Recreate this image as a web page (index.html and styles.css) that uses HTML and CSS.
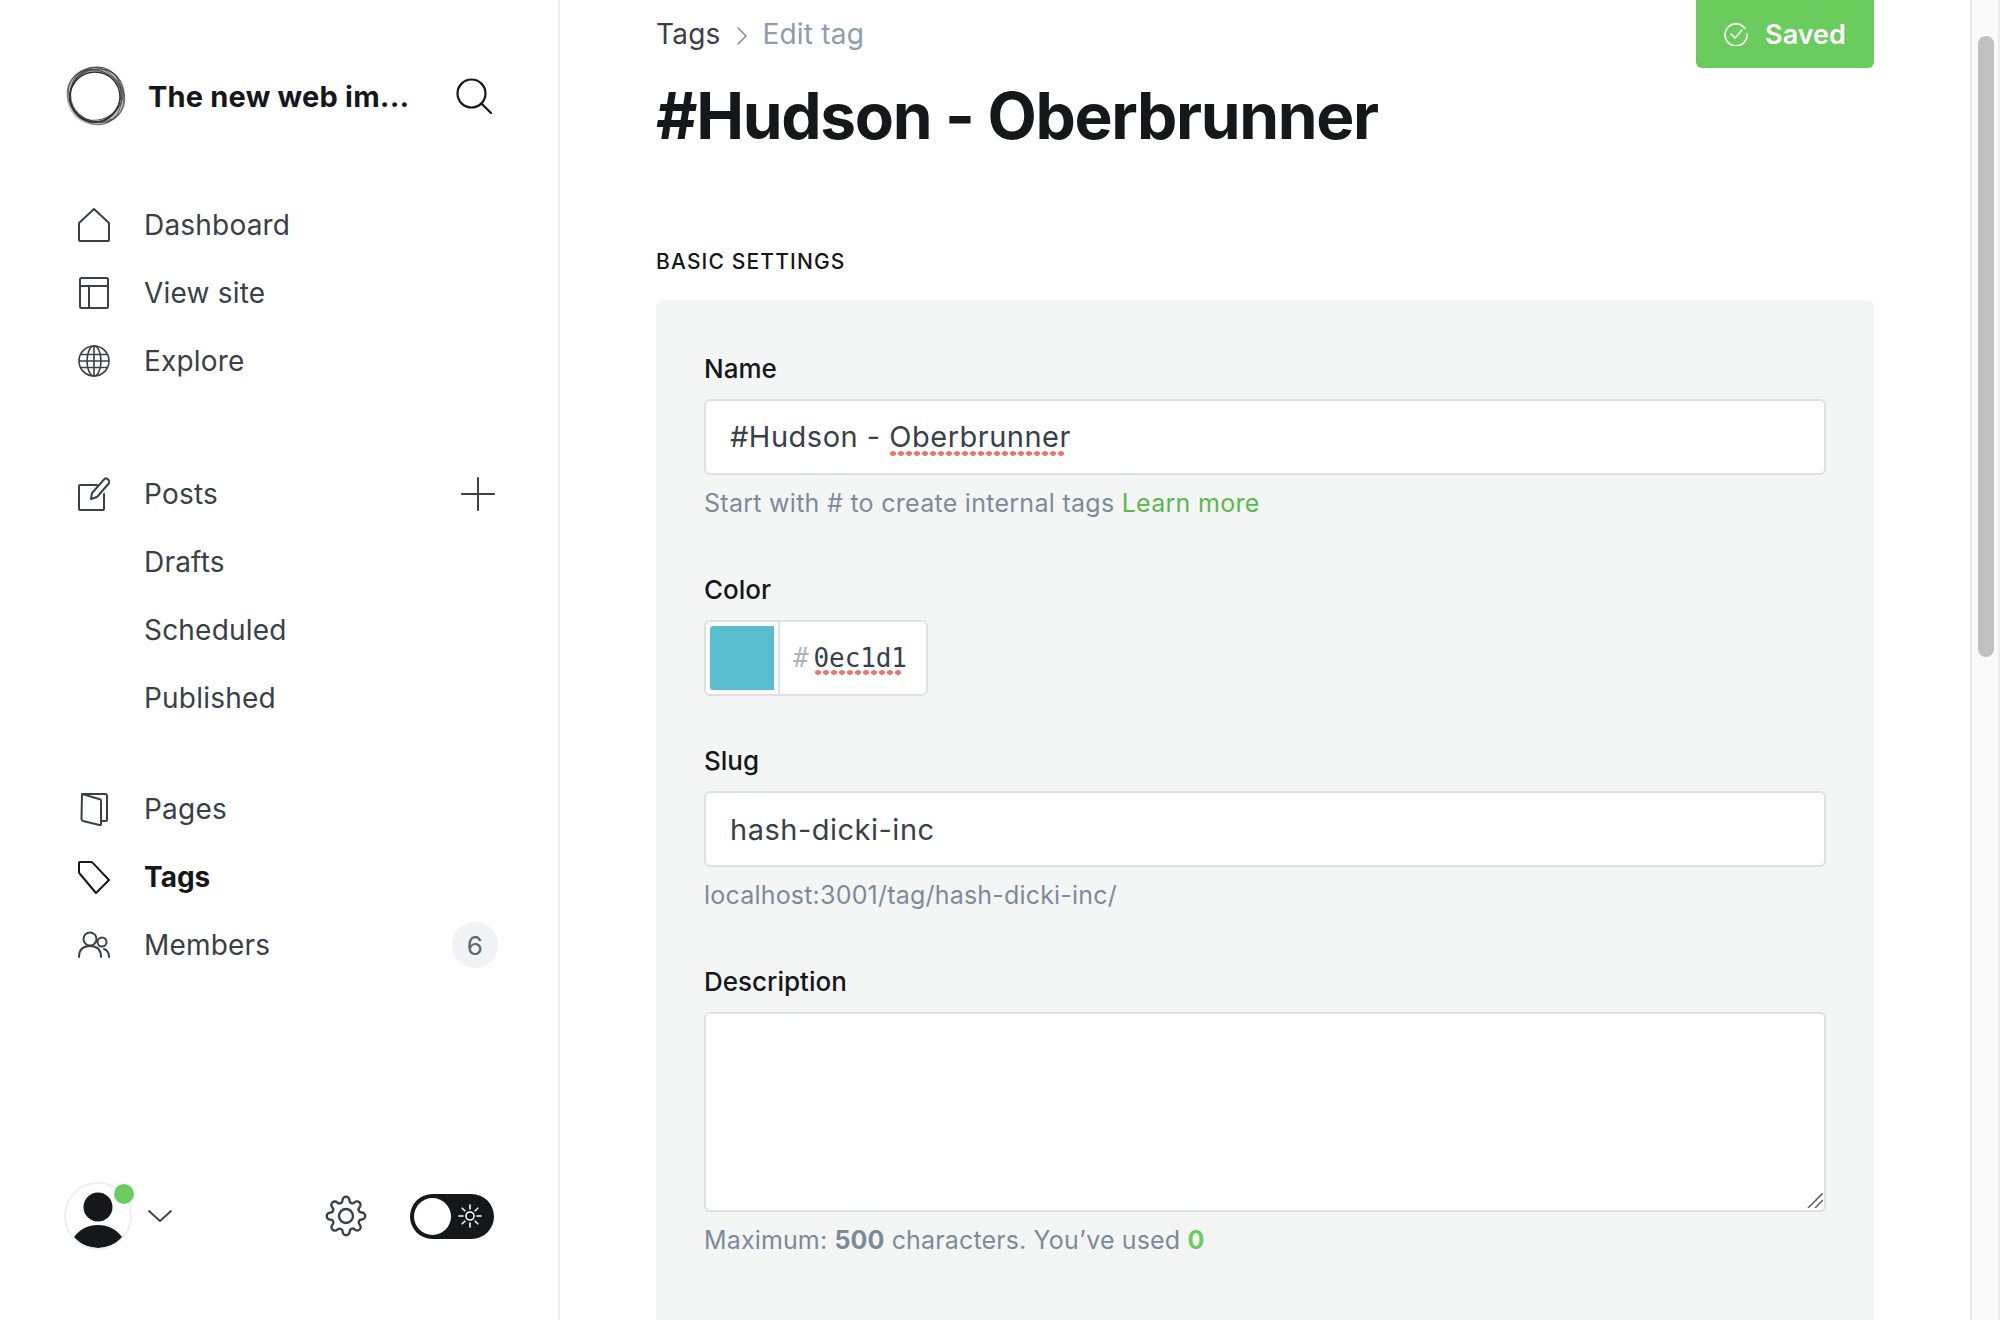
FILE: index.html
```html
<!DOCTYPE html>
<html>

<head>
    <title>Edit tag</title>
    <link rel="stylesheet" href="styles.css">
</head>

<body>
    <aside class="sidebar">
        <div class="site-head">
            <svg class="site-logo" viewBox="0 0 60 60" fill="none" stroke="#2b2e33">
                <circle cx="30" cy="30" r="27" stroke-opacity=".3" stroke-width="4.500" />
                <ellipse cx="30" cy="30" rx="29.500" ry="25" transform="rotate(25 30 30)" stroke-opacity=".6" stroke-width="1" />
                <ellipse cx="30" cy="30" rx="29.500" ry="24.500" transform="rotate(40 30 30)" stroke-opacity=".6" stroke-width="1" />
                <ellipse cx="30" cy="30" rx="29" ry="25" transform="rotate(70 30 30)" stroke-opacity=".6" stroke-width="1" />
                <ellipse cx="29" cy="31" rx="28" ry="25" transform="rotate(115 30 30)" stroke-opacity=".8" stroke-width="1" />
                <ellipse cx="29" cy="31" rx="27.500" ry="25" transform="rotate(150 30 30)" stroke-opacity=".8" stroke-width="1" />
                <circle cx="29" cy="31" r="25" stroke-width="1.400" />
            </svg>
            <span class="site-title">The new web im...</span>
            <svg class="search-icon" viewBox="0 0 36 36" fill="none" stroke="#15171a" stroke-width="2.200" stroke-linecap="round">
                <circle cx="15.500" cy="15.500" r="14" />
                <path d="M25.500 25.500 35 35" />
            </svg>
        </div>

        <nav class="nav-group">
            <a class="nav-item">
                <svg class="nav-icon" viewBox="0 0 32 34" fill="none" stroke="#394047" stroke-width="2" stroke-linejoin="round">
                    <path d="M1 15 16 1l15 14v17a1 1 0 0 1-1 1H2a1 1 0 0 1-1-1z" />
                </svg>
                Dashboard
            </a>
            <a class="nav-item">
                <svg class="nav-icon" viewBox="0 0 32 34" fill="none" stroke="#394047" stroke-width="2" stroke-linejoin="round">
                    <rect x="2" y="2" width="28" height="30" rx="1.500" />
                    <path d="M2 10h28M11 10v22" />
                </svg>
                View site
            </a>
            <a class="nav-item">
                <svg class="nav-icon" viewBox="0 0 32 34" fill="none" stroke="#394047" stroke-width="1.600">
                    <circle cx="16" cy="17" r="15" />
                    <ellipse cx="16" cy="17" rx="7" ry="15" />
                    <path d="M16 2v30M3 10.500h26M1 17h30M3 23.500h26" />
                </svg>
                Explore
            </a>
        </nav>

        <nav class="nav-group">
            <a class="nav-item">
                <svg class="nav-icon" viewBox="0 0 32 34" fill="none" stroke="#394047" stroke-width="2" stroke-linejoin="round" stroke-linecap="round">
                    <path d="M19 8H2a1 1 0 0 0-1 1v23a1 1 0 0 0 1 1h23a1 1 0 0 0 1-1V17" />
                    <path d="M13 22l1-6L26 2.500a2.500 2.500 0 0 1 3.500-.5l1 1a2.500 2.500 0 0 1 .2 3.500L19 20z" />
                </svg>
                Posts
                <svg class="plus-icon" viewBox="0 0 34 34" fill="none" stroke="#394047" stroke-width="2" stroke-linecap="round">
                    <path d="M17 1v32M1 17h32" />
                </svg>
            </a>
            <a class="nav-item sub">Drafts</a>
            <a class="nav-item sub">Scheduled</a>
            <a class="nav-item sub">Published</a>
        </nav>

        <nav class="nav-group last">
            <a class="nav-item">
                <svg class="nav-icon" viewBox="0 0 32 34" fill="none" stroke="#394047" stroke-width="2" stroke-linejoin="round">
                    <path d="M4 2h23a2 2 0 0 1 2 2v24a1 1 0 0 1-1 1h-5" />
                    <path d="M4 2l17 5a2 2 0 0 1 2 2v23a1 1 0 0 1-1.500 1L5 29a2 2 0 0 1-1.500-2z" />
                </svg>
                Pages
            </a>
            <a class="nav-item active">
                <svg class="nav-icon" viewBox="0 0 32 34" fill="none" stroke="#15171a" stroke-width="2" stroke-linejoin="round">
                    <path d="M2 2h11a2 2 0 0 1 1.500.6L31 20 18 33 1.600 13.500A2 2 0 0 1 1 12V3a1 1 0 0 1 1-1z" />
                </svg>
                Tags
            </a>
            <a class="nav-item">
                <svg class="nav-icon" viewBox="0 0 32 34" fill="none" stroke="#394047" stroke-width="2" stroke-linecap="round">
                    <circle cx="12" cy="11" r="6.500" />
                    <path d="M1 29c0-7 4-11 11-11s11 4 11 11" />
                    <circle cx="24" cy="14" r="4.500" />
                    <path d="M26 21c3 1 5 4 5 8" />
                </svg>
                Members
                <span class="count-badge">6</span>
            </a>
        </nav>

        <div class="sidebar-foot">
            <div class="avatar">
                <svg viewBox="0 0 64 64" class="avatar-img">
                    <circle cx="32" cy="23" r="14.500" fill="#15171a" />
                    <path d="M8 53c6-8 14-12 24-12s18 4 24 12c-6 7-14 11-24 11S14 60 8 53z" fill="#15171a" />
                </svg>
                <span class="avatar-dot"></span>
            </div>
            <svg class="chevron-icon" viewBox="0 0 24 12" fill="none" stroke="#394047" stroke-width="1.800" stroke-linecap="round" stroke-linejoin="round">
                <path d="M1 1l11 10L23 1" />
            </svg>
            <svg class="gear-icon" viewBox="0 0 24 24" fill="none" stroke="#394047" stroke-width="1.350">
                <circle cx="12" cy="12" r="4" />
                <path d="M19.400 15a1.650 1.650 0 0 0 .33 1.820l.06.06a2 2 0 0 1 0 2.830 2 2 0 0 1-2.830 0l-.06-.06a1.650 1.650 0 0 0-1.820-.33 1.650 1.650 0 0 0-1 1.510V21a2 2 0 0 1-2 2 2 2 0 0 1-2-2v-.09A1.650 1.650 0 0 0 9 19.400a1.650 1.650 0 0 0-1.820.33l-.06.06a2 2 0 0 1-2.830 0 2 2 0 0 1 0-2.830l.06-.06a1.650 1.650 0 0 0 .33-1.820 1.650 1.650 0 0 0-1.510-1H3a2 2 0 0 1-2-2 2 2 0 0 1 2-2h.09A1.650 1.650 0 0 0 4.600 9a1.650 1.650 0 0 0-.33-1.820l-.06-.06a2 2 0 0 1 0-2.830 2 2 0 0 1 2.830 0l.06.06a1.650 1.650 0 0 0 1.820.33H9a1.650 1.650 0 0 0 1-1.510V3a2 2 0 0 1 2-2 2 2 0 0 1 2 2v.09a1.650 1.650 0 0 0 1 1.510 1.650 1.650 0 0 0 1.820-.33l.06-.06a2 2 0 0 1 2.830 0 2 2 0 0 1 0 2.830l-.06.06a1.650 1.650 0 0 0-.33 1.820V9a1.650 1.650 0 0 0 1.510 1H21a2 2 0 0 1 2 2 2 2 0 0 1-2 2h-.09a1.650 1.650 0 0 0-1.510 1z" />
            </svg>
            <div class="theme-toggle">
                <span class="toggle-knob"></span>
                <svg class="sun-icon" viewBox="0 0 24 24" fill="none" stroke="#fff" stroke-width="1.600" stroke-linecap="round">
                    <circle cx="12" cy="12" r="4" />
                    <path d="M12 1v4M12 19v4M1 12h4M19 12h4M4.200 4.200l2.600 2.600M17.200 17.200l2.600 2.600M4.200 19.800l2.600-2.600M17.200 6.800l2.600-2.600" />
                </svg>
            </div>
        </div>
    </aside>

    <main class="content">
        <div class="page-head">
            <div class="page-title">
                <div class="breadcrumb">
                    <span>Tags</span>
                    <svg class="crumb-arrow" viewBox="0 0 10 18" fill="none" stroke="#7c8b9a" stroke-width="1.500" stroke-linecap="round" stroke-linejoin="round">
                        <path d="M1 1l8 8-8 8" />
                    </svg>
                    <span class="crumb-current">Edit tag</span>
                </div>
                <h1>#Hudson - Oberbrunner</h1>
            </div>
            <button class="saved-btn">
                <svg class="check-icon" viewBox="0 0 24 24" fill="none" stroke="#fff" stroke-width="1.600" stroke-linecap="round" stroke-linejoin="round">
                    <path d="M21 6.500A11 11 0 1 0 23 12" />
                    <path d="M7 12l4 4 7-8" />
                </svg>
                Saved
            </button>
        </div>

        <h2 class="section-title">BASIC SETTINGS</h2>

        <section class="panel">
            <div class="field name-field">
                <label>Name</label>
                <div class="text-input">#Hudson - <span class="misspelled">Oberbrunner</span></div>
                <p class="hint">Start with # to create internal tags <a class="hint-link">Learn more</a></p>
            </div>

            <div class="field color-field">
                <label>Color</label>
                <div class="color-input">
                    <span class="color-box"><span class="color-swatch"></span></span>
                    <span class="color-value"><span class="color-hash">#</span><span class="misspelled short">0ec1d1</span></span>
                </div>
            </div>

            <div class="field slug-field">
                <label>Slug</label>
                <input class="text-input" type="text" value="hash-dicki-inc">
                <p class="hint">localhost:3001/tag/hash-dicki-inc/</p>
            </div>

            <div class="field last-field">
                <label>Description</label>
                <div class="area-wrap">
                    <textarea class="text-area"></textarea>
                    <svg class="resize-grip" viewBox="0 0 16 15" fill="none" stroke="#666" stroke-width="1.600">
                        <path d="M1 15 16 0M8 15l8-8" />
                    </svg>
                </div>
                <p class="hint limit">Maximum: <b>500</b> characters. You’ve used <b class="count-used">0</b></p>
            </div>
        </section>
    </main>

    <div class="scroll-track">
        <div class="scroll-thumb"></div>
    </div>
</body>

</html>
```

FILE: styles.css
```css
* {
    box-sizing: border-box;
}

html,
body {
    height: 100%;
}

body {
    margin: 0;
    display: flex;
    height: 1320px;
    overflow: hidden;
    background-color: #fff;
    font-family: Inter, "Noto Sans", sans-serif;
    color: #15171a;
}

/* sidebar */
.sidebar {
    width: 560px;
    flex: none;
    display: flex;
    flex-direction: column;
    padding: 66px 0 70px 0;
    border-right: 2px solid #eceef0;
}

.site-head {
    display: flex;
    align-items: center;
    height: 60px;
    padding-left: 66px;
}

.site-logo {
    width: 60px;
    height: 60px;
    flex: none;
}

.site-title {
    margin-left: 22px;
    font-size: 29px;
    font-weight: 700;
    letter-spacing: 0.2px;
    white-space: nowrap;
}

.search-icon {
    width: 36px;
    height: 36px;
    margin-left: auto;
    margin-right: 66px;
    flex: none;
}

.nav-group {
    margin-top: 65px;
}

.nav-group.last {
    margin-top: 43px;
}

.nav-item {
    display: flex;
    align-items: center;
    height: 68px;
    padding-left: 78px;
    font-size: 28px;
    letter-spacing: 0.2px;
    color: #394047;
}

.nav-item.sub {
    padding-left: 144px;
}

.nav-item.active {
    font-weight: 700;
    color: #15171a;
    letter-spacing: 0;
}

.nav-icon {
    width: 32px;
    height: 34px;
    margin-right: 34px;
    flex: none;
}

.plus-icon {
    width: 34px;
    height: 34px;
    margin-left: auto;
    margin-right: 63px;
}

.count-badge {
    width: 46px;
    height: 46px;
    margin-left: auto;
    margin-right: 60px;
    display: flex;
    align-items: center;
    justify-content: center;
    border-radius: 50%;
    background-color: #f1f3f4;
    font-size: 26px;
    color: #5d6873;
}

.sidebar-foot {
    margin-top: auto;
    display: flex;
    align-items: center;
    padding-left: 64px;
}

.avatar {
    position: relative;
    width: 68px;
    height: 68px;
    flex: none;
    border-radius: 50%;
    border: 2px solid #ebeef0;
}

.avatar-img {
    display: block;
    width: 64px;
    height: 64px;
    border-radius: 50%;
}

.avatar-dot {
    position: absolute;
    top: 0;
    right: -4px;
    width: 20px;
    height: 20px;
    border-radius: 50%;
    background-color: #6acc5d;
}

.chevron-icon {
    width: 24px;
    height: 12px;
    margin-left: 16px;
    flex: none;
}

.gear-icon {
    width: 42px;
    height: 42px;
    margin-left: 153px;
    flex: none;
}

.theme-toggle {
    width: 84px;
    height: 45px;
    margin-left: 43px;
    padding: 0 4px;
    flex: none;
    display: flex;
    align-items: center;
    justify-content: space-between;
    border-radius: 23px;
    background-color: #15171a;
}

.toggle-knob {
    width: 37px;
    height: 37px;
    border-radius: 50%;
    background-color: #fff;
}

.sun-icon {
    width: 24px;
    height: 24px;
    margin-right: 8px;
}

/* main column */
.content {
    flex: 1;
    min-width: 0;
    display: flex;
    flex-direction: column;
    padding: 0 96px 0 96px;
}

.page-head {
    display: flex;
    justify-content: space-between;
    align-items: flex-start;
}

.breadcrumb {
    display: flex;
    align-items: center;
    height: 68px;
    font-size: 28px;
    letter-spacing: 0.2px;
    color: #394047;
}

.crumb-arrow {
    width: 10px;
    height: 18px;
    margin: 4px 16px 0 16px;
}

.crumb-current {
    color: #8e9cac;
}

h1 {
    margin: 10px 0 0 0;
    font-size: 64px;
    line-height: 76px;
    font-weight: 700;
    letter-spacing: -1.33px;
    white-space: nowrap;
}

.saved-btn {
    width: 178px;
    height: 68px;
    display: flex;
    align-items: center;
    justify-content: center;
    gap: 17px;
    border: none;
    border-radius: 0 0 6px 6px;
    background-color: #6acc5d;
    color: #fff;
    font-family: inherit;
    font-size: 27px;
    font-weight: 600;
}

.check-icon {
    width: 24px;
    height: 24px;
}

.section-title {
    margin: 94px 0 0 0;
    font-size: 21px;
    line-height: 28px;
    font-weight: 500;
    letter-spacing: 1.15px;
    color: #15171a;
}

.panel {
    flex: 1;
    margin-top: 24px;
    padding: 52px 48px 0 48px;
    background-color: #f4f6f6;
    border-radius: 6px 6px 0 0;
}

.field {
    margin-bottom: 54px;
}

.color-field {
    margin-bottom: 48px;
}

.last-field {
    margin-bottom: 0;
}

.field label {
    display: block;
    height: 34px;
    line-height: 34px;
    font-size: 26px;
    font-weight: 500;
    color: #15171a;
}

.text-input {
    display: block;
    width: 100%;
    height: 76px;
    margin-top: 13px;
    padding: 0 24px;
    border: 2px solid #dee0e1;
    border-radius: 6px;
    background-color: #fff;
    font-family: inherit;
    font-size: 29px;
    line-height: 72px;
    color: #394047;
    letter-spacing: 0.5px;
}

.misspelled {
    position: relative;
}

.misspelled::after {
    content: "";
    position: absolute;
    left: 0;
    right: 6px;
    bottom: -2px;
    height: 5px;
    background: radial-gradient(ellipse 3.2px 2.5px, #ef746a 85%, transparent) 0 0 / 8px 5px repeat-x;
}

.misspelled.short::after {
    right: 5px;
}

.hint {
    margin: 12px 0 0 0;
    font-size: 25px;
    line-height: 32px;
    color: #7c8b9a;
    letter-spacing: 0.2px;
}

.name-field .hint {
    letter-spacing: 0.28px;
}

.hint.limit {
    letter-spacing: 0.14px;
}

.hint-link {
    color: #5ab84c;
}

.count-used {
    color: #6acc5d;
}

.color-input {
    display: flex;
    width: 224px;
    height: 76px;
    margin-top: 13px;
    border: 2px solid #dee0e1;
    border-radius: 6px;
    background-color: #fff;
}

.color-box {
    width: 74px;
    flex: none;
    padding: 4px;
    border-right: 2px solid #dee0e1;
}

.color-swatch {
    display: block;
    height: 100%;
    border-radius: 3px 0 0 3px;
    background-color: #5abdcf;
}

.color-value {
    display: flex;
    align-items: center;
    padding-left: 13px;
    font-family: "DejaVu Sans Mono", monospace;
    font-size: 26px;
    letter-spacing: -0.1px;
    color: #394047;
}

.color-hash {
    margin-right: 5px;
    color: #abb4be;
}

.area-wrap {
    position: relative;
    margin-top: 13px;
}

.text-area {
    display: block;
    width: 100%;
    height: 200px;
    border: 2px solid #dee0e1;
    border-radius: 6px;
    background-color: #fff;
    resize: none;
}

.resize-grip {
    position: absolute;
    right: 3px;
    bottom: 4px;
    width: 16px;
    height: 15px;
}

/* fake window scrollbar */
.scroll-track {
    width: 30px;
    flex: none;
    padding: 36px 4px 0 6px;
    border-left: 2px solid #e8e8e8;
    border-right: 2px solid #ececec;
    background-color: #fafafa;
}

.scroll-thumb {
    width: 16px;
    height: 621px;
    border-radius: 8px;
    background-color: #c1c1c1;
}
```
